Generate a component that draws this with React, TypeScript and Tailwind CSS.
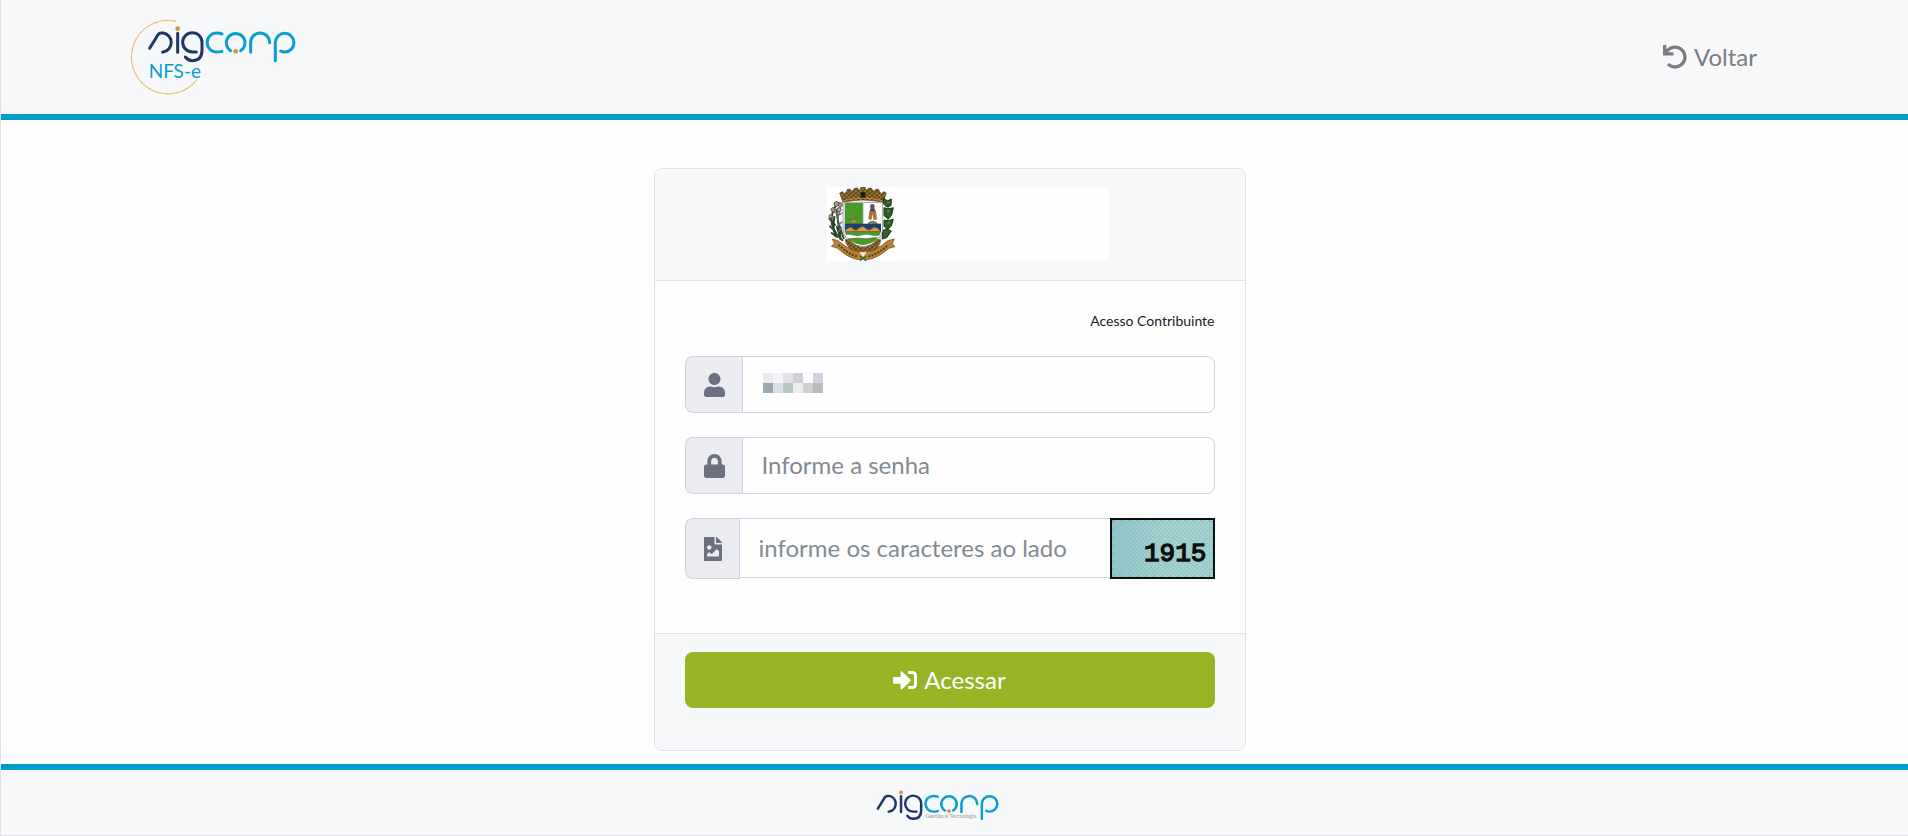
import { useState } from "react";
import type { ReactNode } from "react";
import { FaFileImage, FaLock, FaSignInAlt, FaUndo, FaUser } from "react-icons/fa";

const NAVY = "#1f3763";
const BLUE = "#0a9dd0";
const GOLD = "#c9963a";

function Wordmark() {
    return (
        <g fill="none" strokeWidth="9" strokeLinecap="round" strokeLinejoin="round">
            <g stroke={NAVY}>
                <path d="M119 146 L145 104 Q148 100 153 100 H160 A29 29 0 0 1 160 157 H158" />
                <path d="M203 101 V158" />
                <path d="M259 157 H247 A29 29 0 1 1 276 128 V152 Q276 183 247 183 Q234 183 226 172" />
            </g>
            <g stroke={BLUE}>
                <path d="M336 103 Q329 100 320 100 A28 28 0 0 0 320 157 Q329 157 336 155" />
                <path d="M362 153 A28 28 0 1 1 392 153" />
                <path d="M422 158 V128 A28 28 0 0 1 479 129" />
                <path d="M496 183 V128 A28 28 0 1 1 525 157 Q517 157 512 154" />
            </g>
            <circle cx="203" cy="87" r="7" fill={GOLD} />
            <circle cx="377" cy="155" r="7" fill={GOLD} />
        </g>
    );
}

function HeaderLogo() {
    return (
        <svg viewBox="60 55 501 234" className="h-[78px] w-[167px]" role="img" aria-label="sigcorp NFS-e">
            <path d="M198 65 A110 110 0 1 0 261 240" fill="none" stroke="#edc47c" strokeWidth="3.5" />
            <path
                d="M198 65 A110 110 0 1 0 261 240"
                fill="none"
                stroke="#c9963a"
                strokeWidth="2"
                strokeDasharray="6 22"
                opacity="0.6"
            />
            <Wordmark />
            <text x="116" y="234" fill={BLUE} fontSize="57" fontFamily="Lato, sans-serif">
                NFS-e
            </text>
        </svg>
    );
}

function FooterLogo() {
    return (
        <svg viewBox="113 75 448 116" className="h-8 w-[124px]" role="img" aria-label="sigcorp">
            <Wordmark />
            <text x="292" y="180" fill="#9a9da3" fontSize="21" fontFamily="Lato, sans-serif">
                Gestão e Tecnologia
            </text>
        </svg>
    );
}

function Crest() {
    return (
        <svg viewBox="50 50 210 222" className="h-[74px] w-[70px] bg-white" role="img" aria-label="Brasão do município">
            <defs>
                <pattern id="brick" width="14" height="12" patternUnits="userSpaceOnUse">
                    <rect width="14" height="12" fill="#b9762f" />
                    <path d="M0 2 H8 M7 8 H14 M3 2 V7 M11 8 V12" stroke="#2f3a1a" strokeWidth="3.5" />
                </pattern>
                <clipPath id="shield">
                    <path d="M102 98 H213 V170 C213 203 188 223 158 224 C126 223 102 203 102 170 Z" />
                </clipPath>
            </defs>

            {/* crown */}
            <path
                d="M88 68 L97 64 L101 70 L108 66 L111 57 L120 57 L123 62 L130 60 L132 54 L142 53 L145 59 L151 58 V51 H165 V58 L171 59 L174 53 L184 54 L186 60 L193 62 L196 57 L205 57 L208 66 L215 70 L219 64 L228 68 L218 96 Q158 82 98 96 Z"
                fill="url(#brick)"
                stroke="#55401f"
                strokeWidth="2"
            />
            <rect x="151" y="66" width="14" height="17" rx="4" fill="#101c14" />
            <path d="M100 91 Q158 76 216 91" fill="none" stroke="#c98a3c" strokeWidth="3" />

            {/* left branch */}
            <g fill="none" stroke="#34502e" strokeWidth="6" strokeLinecap="round">
                <path d="M96 210 Q60 180 64 142 Q68 112 84 98" />
                <path d="M91 206 Q84 160 78 118 M100 204 Q92 180 82 150 M64 188 L80 200 M59 168 L75 184 M57 145 L74 164" />
                <path d="M75 196 Q66 170 72 140 M88 196 L80 170" stroke="#24401f" />
                <path d="M95 155 L80 168 M94 172 L84 184 M95 128 L78 140 M72 125 L84 132 M90 112 L82 150" stroke="#6d7480" strokeWidth="4" />
            </g>
            <g fill="#b9b0ae" stroke="#5b4b46" strokeWidth="3">
                <circle cx="78" cy="101" r="7" />
                <circle cx="90" cy="103" r="6" />
                <circle cx="68" cy="118" r="6" />
                <circle cx="86" cy="118" r="6" />
                <circle cx="61" cy="138" r="5" />
            </g>
            <path d="M72 99 L82 104 M63 120 L73 115 M86 100 L93 105" stroke="#b9692f" strokeWidth="3" />

            {/* right branch */}
            <path d="M230 88 Q242 140 220 202" fill="none" stroke="#a8622c" strokeWidth="4" />
            <g fill="#2c6125" stroke="#1b331b" strokeWidth="3">
                <path d="M220 84 L231 92 L243 86 L242 106 L229 110 L219 100 Z" />
                <path d="M221 112 L233 116 L249 112 L244 134 L234 146 L221 136 Z" />
                <path d="M221 149 L234 151 L249 147 L243 167 L233 176 L221 168 Z" />
                <path d="M218 180 L230 176 L243 182 L229 202 L215 206 Z" />
            </g>
            <path d="M230 98 L238 95 M230 124 L238 122 M231 160 L239 156" stroke="#4b9b33" strokeWidth="4" />

            {/* shield */}
            <path
                d="M98 96 H217 V170 C217 206 190 227 158 228 C124 227 98 206 98 170 Z"
                fill="#ffffff"
                stroke="#6c6f86"
                strokeWidth="2"
            />
            <g clipPath="url(#shield)">
                <rect x="102" y="98" width="56" height="64" fill="#4b9b29" />
                <rect x="160" y="100" width="53" height="60" fill="#ffffff" />
                <rect x="102" y="160" width="111" height="26" fill="#20406f" />
                <rect x="102" y="184" width="111" height="40" fill="#4b9b29" />
                <path
                    d="M102 184 L109 176 L121 170 L132 178 L138 180 L148 172 L158 168 L170 177 L179 179 L190 171 L200 172 L213 184 Z"
                    fill="#d59b45"
                    stroke="#6b5128"
                    strokeWidth="2"
                />
                <path
                    d="M102 194 Q115 190 128 194 T155 194 T182 194 T213 193 V204 Q195 200 182 203 T155 204 T128 204 T102 203 Z"
                    fill="#ffffff"
                    stroke="#4a554a"
                    strokeWidth="1.5"
                />
            </g>
            <path d="M158 98 V160" stroke="#7c9ab3" strokeWidth="2" />
            <path d="M105 146 L120 148 L138 141 L154 132" fill="none" stroke="#a8522f" strokeWidth="2.5" />
            <path d="M120 155 L130 149 L139 151 L133 157 Z" fill="#d08b34" />
            <circle cx="186" cy="108" r="7" fill="#5a5561" />
            <path d="M177 122 Q186 108 197 122 L200 147 L190 150 L187 132 L183 150 L174 146 Z" fill="#b4713a" />
            <path d="M180 114 H193 V123 H180 Z" fill="#3d4353" />
            <path d="M173 159 Q187 147 201 159 Z" fill="#7fa07c" stroke="#33423a" strokeWidth="2" />

            {/* ribbon */}
            <path
                d="M66 206 L84 211 Q118 242 158 247 Q198 242 232 211 L252 206 L246 220 L254 229 L236 234 Q200 266 166 269 L158 262 L150 269 Q112 264 82 234 L63 228 L72 219 Z"
                fill="#bd7e38"
                stroke="#6b4723"
                strokeWidth="2"
            />
            <path
                d="M104 208 L116 207 Q136 230 158 231 Q182 230 200 207 L212 208 Q208 232 188 241 L158 244 L130 241 Q109 232 104 208 Z"
                fill="url(#brick)"
                stroke="#6b4723"
                strokeWidth="1.5"
            />
            <path d="M84 223 Q112 250 142 259 M174 259 Q206 250 234 223" fill="none" stroke="#3b4a22" strokeWidth="6" strokeDasharray="6 4" />
            <path d="M147 246 L158 260 L169 246 Z" fill="#eef2ea" />
            <path d="M149 258 L167 271 M167 258 L149 271" stroke="#2e5c29" strokeWidth="4" />
        </svg>
    );
}

const mosaic = [
    "#ebebef", "#f5f5f9", "#e0e4e7", "#d1ced6", "#fefefe", "#cfd1e2",
    "#9da9b0", "#dcdfe5", "#bac5c5", "#ededf1", "#d1ced6", "#bbbdb7",
];

function Mosaic() {
    return (
        <svg viewBox="0 0 60 20" className="pointer-events-none absolute top-[17px] left-[21px] h-5 w-[60px]" aria-hidden="true">
            {mosaic.map((color, i) => (
                <rect key={i} x={(i % 6) * 10} y={Math.floor(i / 6) * 10} width="10" height="10" fill={color} />
            ))}
        </svg>
    );
}

function Captcha() {
    return (
        <svg viewBox="0 0 105 61" className="-ml-px h-[61px] w-[105px] shrink-0" role="img" aria-label="Caracteres de verificação">
            <defs>
                <pattern id="grain" width="4" height="4" patternUnits="userSpaceOnUse">
                    <rect width="4" height="4" fill="#a5d2d0" />
                    <path d="M0 0 H2 V2 H0 Z M2 2 H4 V4 H2 Z" fill="#98c9cb" />
                </pattern>
                <linearGradient id="shade">
                    <stop offset="0" stopColor="#7fb9c2" stopOpacity="0.45" />
                    <stop offset="0.5" stopColor="#7fb9c2" stopOpacity="0" />
                </linearGradient>
            </defs>
            <rect width="105" height="61" fill="#0b0f12" />
            <rect x="2" y="2" width="101" height="57" fill="url(#grain)" />
            <rect x="2" y="2" width="101" height="57" fill="url(#shade)" />
            <path d="M3 3 V58 M3 3 H102 M102 3 V58 M3 58 H102" fill="none" stroke="#6b6478" strokeWidth="1" strokeDasharray="1 7" opacity="0.7" />
            <text
                x="34"
                y="43"
                fill="#0d0d0d"
                stroke="#0d0d0d"
                strokeWidth="1.3"
                fontSize="26"
                fontFamily="'Liberation Mono', monospace"
            >
                1915
            </text>
        </svg>
    );
}

interface FieldProps {
    id: string;
    label: string;
    icon: ReactNode;
    children: ReactNode;
}

function Field({ id, label, icon, children }: FieldProps) {
    return (
        <div className="flex items-start">
            <label
                htmlFor={id}
                aria-label={label}
                className="flex items-center self-stretch rounded-l-lg border border-r-0 border-[#d0d1e2] bg-[#ebebf2] px-[18px] text-[#6c7080]"
            >
                {icon}
            </label>
            {children}
        </div>
    );
}

export default function App() {
    const [user, setUser] = useState("");
    const [password, setPassword] = useState("");
    const [code, setCode] = useState("");

    const inputClass =
        "w-full min-w-0 border border-[#d0d1e2] bg-[#fefefe] px-[19px] pb-0.5 text-2xl text-[#495057] placeholder:text-[#828b93] outline-none focus:border-[#0a9dd0]";

    return (
        <div className="flex min-h-screen flex-col border-b border-l border-[#dfe1e6] bg-[#fefefe] font-['Lato','Open_Sans',sans-serif]">
            <header className="flex items-center justify-between border-b-6 border-[#009bcf] bg-[#f7f8fa] px-[129px] py-[18px]">
                <HeaderLogo />
                <a href="#" className="flex items-center gap-[7px] px-[22px] text-2xl text-[#7d7c81]">
                    <FaUndo className="size-6" />
                    Voltar
                </a>
            </header>

            <main className="flex grow flex-col items-center pt-12 pr-2.5 pb-[13px]">
                <form
                    onSubmit={(e) => e.preventDefault()}
                    className="w-full max-w-[592px] overflow-hidden rounded-lg border border-[#e0e1ed]"
                >
                    <div className="flex justify-center border-b border-[#e0e1ed] bg-[#f7f8fa] pt-[18px] pb-[19px] pl-9">
                        <div className="flex w-[282px] items-center">
                            <Crest />
                            <div className="h-[72px] grow bg-[#fefefe]" />
                        </div>
                    </div>

                    <div className="px-[30px] pt-[30px] pb-[54px]">
                        <p className="mb-[25px] text-right text-sm text-[#1c2126]">Acesso Contribuinte</p>
                        <div className="space-y-6">
                            <Field id="user" label="Usuário" icon={<FaUser className="h-6 w-[21px]" />}>
                                <div className="relative -ml-px grow">
                                    <input
                                        id="user"
                                        type="text"
                                        value={user}
                                        onChange={(e) => setUser(e.target.value)}
                                        className={`${inputClass} block h-[57px] rounded-r-lg`}
                                    />
                                    {!user && <Mosaic />}
                                </div>
                            </Field>
                            <Field id="password" label="Senha" icon={<FaLock className="h-6 w-[21px]" />}>
                                <input
                                    id="password"
                                    type="password"
                                    placeholder="Informe a senha"
                                    value={password}
                                    onChange={(e) => setPassword(e.target.value)}
                                    className={`${inputClass} -ml-px h-[57px] rounded-r-lg`}
                                />
                            </Field>
                            <Field id="code" label="Caracteres" icon={<FaFileImage className="h-6 w-[18px]" />}>
                                <input
                                    id="code"
                                    type="text"
                                    placeholder="informe os caracteres ao lado"
                                    value={code}
                                    onChange={(e) => setCode(e.target.value)}
                                    className={`${inputClass} -ml-px h-[60px]`}
                                />
                                <Captcha />
                            </Field>
                        </div>
                    </div>

                    <div className="border-t border-[#e0e1ed] bg-[#f7f8fa] px-[30px] pt-[18px] pb-[42px]">
                        <button
                            type="submit"
                            className="flex h-14 w-full items-center justify-center gap-[7px] rounded-lg bg-[#96b424] text-2xl text-white"
                        >
                            <FaSignInAlt className="size-6" />
                            Acessar
                        </button>
                    </div>
                </form>
            </main>

            <footer className="flex justify-center border-t-6 border-[#009bcf] bg-[#f7f8fa] pt-[19px] pr-[34px] pb-[14px]">
                <FooterLogo />
            </footer>
        </div>
    );
}
